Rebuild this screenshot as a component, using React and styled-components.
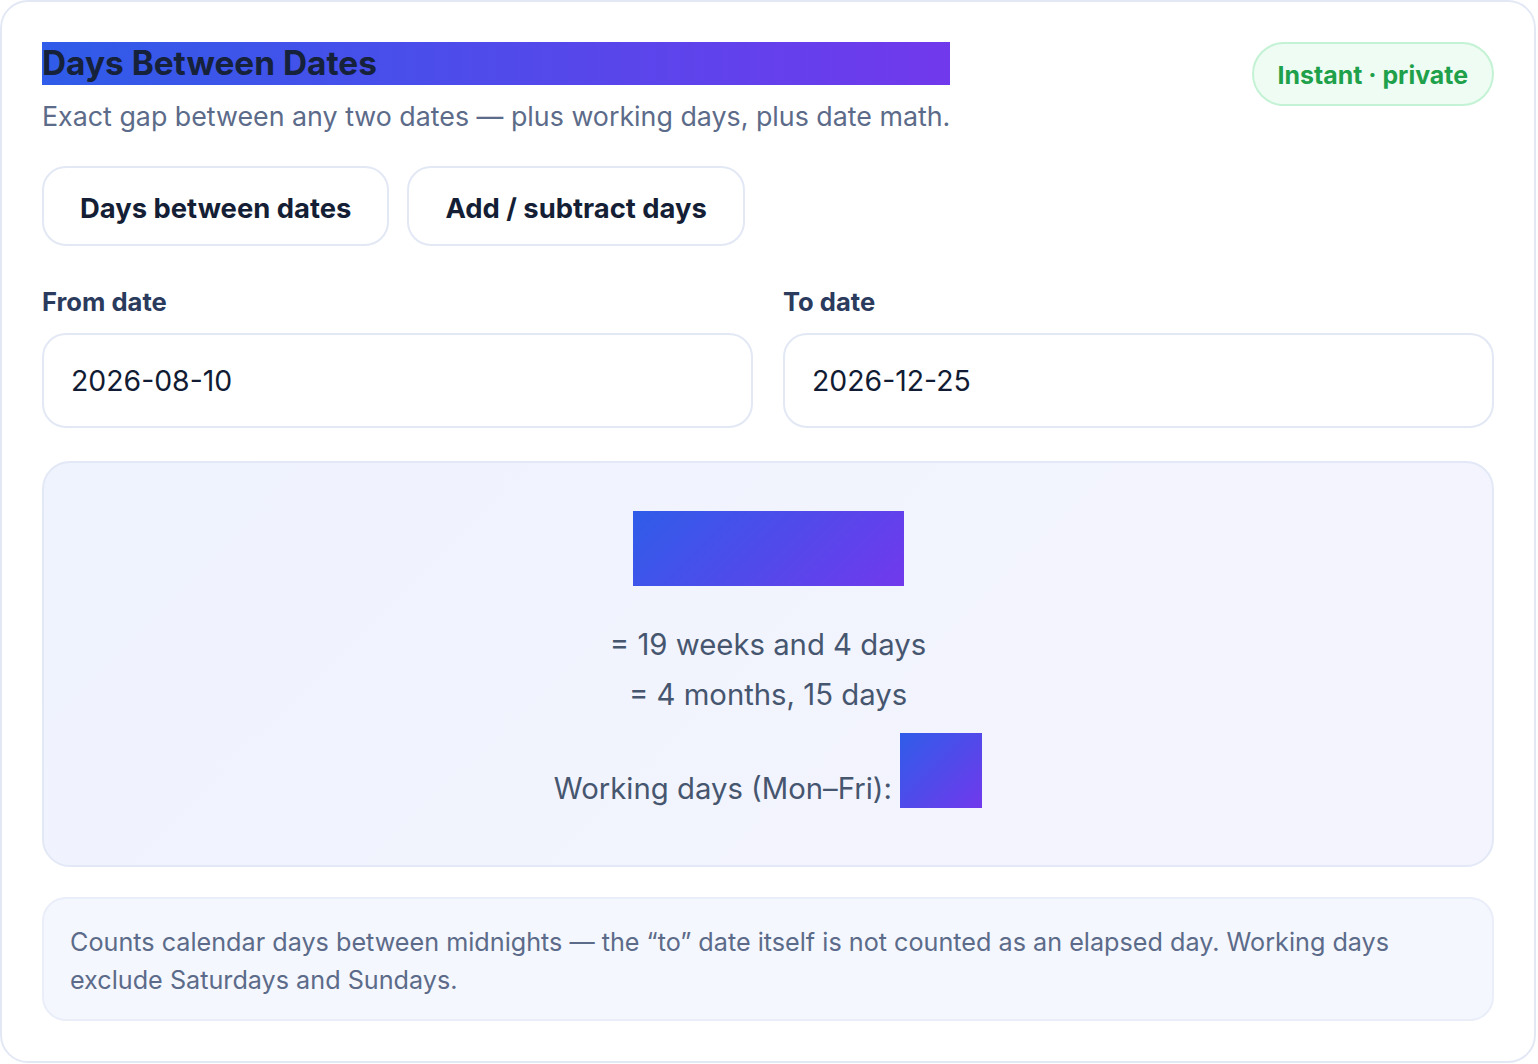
import React from 'react'
import styled, { createGlobalStyle } from 'styled-components'

const GlobalStyle = createGlobalStyle`
  body {
    margin: 0;
    background: #ffffff;
    font-family: "Inter", "Liberation Sans", sans-serif;
  }
`;

const Card = styled.div`
  width: 1536px;
  box-sizing: border-box;
  padding: 40px;
  border: 2px solid #e3e8f5;
  border-radius: 28px;
  background: #ffffff;
`;

const Header = styled.div`
  display: flex;
  justify-content: space-between;
  align-items: flex-start;
`;

const TitleBlock = styled.div`
  display: flex;
  flex-direction: column;
`;

const Title = styled.h1`
  margin: 0;
  font-size: 33.4px;
  line-height: 43px;
  font-weight: 700;
  color: #16213a;
  background: linear-gradient(90deg, #2f5ce9, #7139ec);
`;

const Subtitle = styled.p`
  margin: 13px 0 0;
  font-size: 26.8px;
  line-height: 36px;
  color: #5c6b89;
`;

const Badge = styled.span`
  display: inline-block;
  padding: 0 24px;
  height: 60px;
  line-height: 63px;
  border-radius: 999px;
  border: 2px solid #c4f2d4;
  background: #eefcf3;
  color: #1fa04a;
  font-size: 24.9px;
  font-weight: 700;
`;

const Tabs = styled.div`
  display: flex;
  gap: 18px;
  margin-top: 32px;
`;

const Tab = styled.button`
  height: 80px;
  padding: 0 36px;
  border: 2px solid #e3e8f5;
  border-radius: 24px;
  background: #ffffff;
  font-family: "Inter", "Liberation Sans", sans-serif;
  font-size: 27.4px;
  line-height: 80px;
  font-weight: 700;
  color: #141e35;
`;

const Fields = styled.div`
  display: grid;
  grid-template-columns: 1fr 1fr;
  gap: 30px;
  margin-top: 40px;
`;

const Field = styled.div`
  display: flex;
  flex-direction: column;
  gap: 15px;
`;

const Label = styled.label`
  font-size: 25.6px;
  line-height: 32px;
  font-weight: 700;
  color: #2b3b5e;
`;

const DateInput = styled.div`
  height: 95px;
  box-sizing: border-box;
  display: flex;
  align-items: center;
  padding: 0 27px;
  border: 2px solid #e3e8f5;
  border-radius: 24px;
  font-size: 28.4px;
  color: #111b33;
`;

const Result = styled.div`
  margin-top: 33px;
  padding: 48px 40px 51px;
  border: 2px solid #e3e8f6;
  border-radius: 28px;
  background: linear-gradient(135deg, #eff3fd, #f4f4fe);
  text-align: center;
`;

const Gradient = styled.span`
  display: inline-block;
  width: ${p => p.$w}px;
  height: 75px;
  vertical-align: ${p => p.$align || 'top'};
  background: linear-gradient(135deg, #2f5ce9, #7139ec);
  color: transparent;
  font-size: 60px;
  line-height: 75px;
  font-weight: 800;
`;

const Line = styled.div`
  font-size: 29.3px;
  line-height: 50px;
  color: #46566f;
  margin-top: ${p => p.$top || 0}px;
`;

const Note = styled.p`
  margin: 30px 0 0;
  padding: 24px 26px 20px;
  border: 2px solid #eaeef9;
  border-radius: 24px;
  background: #f4f7fe;
  font-size: 25.2px;
  line-height: 38px;
  color: #5c6b89;
`;

export default function App() {
  return (
    <>
      <GlobalStyle />
      <Card>
        <Header>
          <TitleBlock>
            <Title>Days Between Dates</Title>
            <Subtitle>Exact gap between any two dates — plus working days, plus date math.</Subtitle>
          </TitleBlock>
          <Badge>Instant · private</Badge>
        </Header>

        <Tabs>
          <Tab>Days between dates</Tab>
          <Tab>Add / subtract days</Tab>
        </Tabs>

        <Fields>
          <Field>
            <Label>From date</Label>
            <DateInput>2026-08-10</DateInput>
          </Field>
          <Field>
            <Label>To date</Label>
            <DateInput>2026-12-25</DateInput>
          </Field>
        </Fields>

        <Result>
          <Gradient $w={271}>137 days</Gradient>
          <Line $top={34}>= 19 weeks and 4 days</Line>
          <Line>= 4 months, 15 days</Line>
          <Line $top={13}>
            Working days (Mon–Fri): <Gradient $w={82} $align="7px">99</Gradient>
          </Line>
        </Result>

        <Note>
          Counts calendar days between midnights — the “to” date itself is not counted as an elapsed day. Working days exclude Saturdays and Sundays.
        </Note>
      </Card>
    </>
  )
}
